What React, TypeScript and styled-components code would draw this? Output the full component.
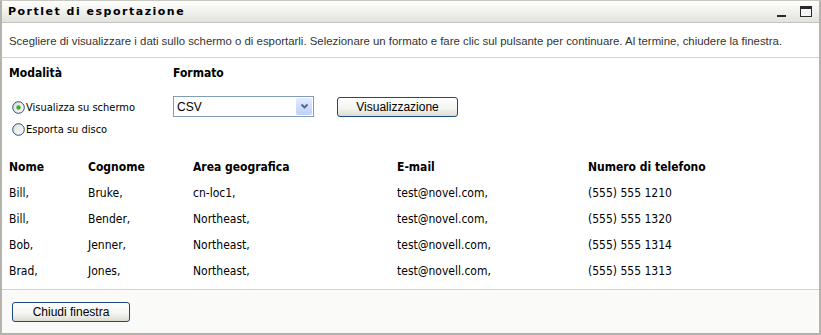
import React from 'react';
import styled, { createGlobalStyle } from 'styled-components';

const GlobalStyle = createGlobalStyle`
  html, body {
    margin: 0;
    padding: 0;
    background: #ffffff;
  }
`;

const Portlet = styled.div`
  box-sizing: border-box;
  width: 821px;
  height: 335px;
  border: 2px solid #b4b4ac;
  border-top: 1px solid #c8c8c0;
  display: flex;
  flex-direction: column;
  background: #ffffff;
`;

const TitleBar = styled.div`
  height: 21px;
  display: flex;
  align-items: center;
  justify-content: space-between;
  padding: 0 7px 0 6px;
  background: linear-gradient(#ffffff, #e2e2de);
  border-bottom: 1px solid #c4c4bc;
`;

const Title = styled.h1`
  margin: 0;
  font-family: 'DejaVu Sans', sans-serif;
  font-size: 11px;
  font-weight: bold;
  letter-spacing: 1.5px;
  color: #000000;
`;

const WindowControls = styled.div`
  display: flex;
  align-items: center;
  gap: 14px;
`;

const Intro = styled.p`
  margin: 0;
  padding: 12px 7px 10px;
  font-family: 'Liberation Sans', sans-serif;
  font-size: 11.4px;
  color: #333333;
  border-bottom: 1px solid #d4d4cc;
`;

const Body = styled.div`
  flex: 1;
  padding: 8px 7px 0;
  border-bottom: 1px solid #d4d4cc;
`;

const Options = styled.div`
  display: flex;
`;

const OptionGroup = styled.div<{ width: number }>`
  width: ${({ width }) => width}px;
  display: flex;
  flex-direction: column;
`;

const GroupLabel = styled.div`
  font-family: 'DejaVu Sans', sans-serif;
  font-stretch: condensed;
  font-size: 12px;
  font-weight: bold;
  height: 22px;
  margin-bottom: 8px;
`;

const RadioRow = styled.label`
  display: flex;
  align-items: center;
  gap: 1px;
  height: 22px;
  padding-left: 3px;
  font-family: 'DejaVu Sans', sans-serif;
  font-stretch: condensed;
  font-size: 11px;
  color: #000000;
`;

const Controls = styled.div`
  display: flex;
  gap: 23px;
  align-items: center;
`;

const Select = styled.div`
  box-sizing: border-box;
  width: 141px;
  height: 21px;
  border: 1px solid #7f9db9;
  display: flex;
  align-items: center;
  justify-content: space-between;
  padding: 1px 1px 1px 3px;
  font-family: 'Liberation Sans', sans-serif;
  font-size: 12px;
`;

const SelectArrow = styled.span`
  width: 16px;
  height: 17px;
  display: flex;
  align-items: center;
  justify-content: center;
  border-radius: 2px;
  background: linear-gradient(#e2ebfe, #bfd0f8);
`;

const Button = styled.button<{ width: number }>`
  box-sizing: border-box;
  width: ${({ width }) => width}px;
  height: 20px;
  padding: 0;
  border: 1px solid #1c4a7a;
  border-radius: 3px;
  background: linear-gradient(#ffffff 0%, #f4f4f0 60%, #dcdcd4 100%);
  font-family: 'Liberation Sans', sans-serif;
  font-size: 12px;
  color: #000000;
`;

const Table = styled.table`
  border-collapse: collapse;
  margin-top: 14px;
  font-family: 'DejaVu Sans', sans-serif;
  font-stretch: condensed;
  font-size: 12px;
  color: #000000;
`;

const HeadCell = styled.th<{ width: number }>`
  width: ${({ width }) => width}px;
  text-align: left;
  font-weight: bold;
  padding: 0;
  height: 26px;
`;

const Cell = styled.td`
  padding: 0;
  height: 26px;
`;

const Footer = styled.div`
  height: 43px;
  box-sizing: border-box;
  display: flex;
  align-items: flex-start;
  padding: 12px 10px 0;
  background: #fafaf8;
`;

const Radio: React.FC<{ checked?: boolean }> = ({ checked }) => (
  <svg width="13" height="13" viewBox="0 0 13 13">
    <defs>
      <linearGradient id="rbg" x1="0" y1="0" x2="1" y2="1">
        <stop offset="0" stopColor="#dcdcd6" />
        <stop offset="1" stopColor="#ffffff" />
      </linearGradient>
    </defs>
    <circle cx="6.5" cy="6.5" r="5.8" fill="url(#rbg)" stroke="#1c5180" strokeWidth="1" />
    {checked && <circle cx="6.5" cy="6.5" r="2.2" fill="#3cae2e" />}
  </svg>
);

const rows = [
  ['Bill,', 'Bruke,', 'cn-loc1,', 'test@novel.com,', '(555) 555 1210'],
  ['Bill,', 'Bender,', 'Northeast,', 'test@novel.com,', '(555) 555 1320'],
  ['Bob,', 'Jenner,', 'Northeast,', 'test@novell.com,', '(555) 555 1314'],
  ['Brad,', 'Jones,', 'Northeast,', 'test@novell.com,', '(555) 555 1313'],
];

const columns: [string, number][] = [
  ['Nome', 79],
  ['Cognome', 105],
  ['Area geografica', 204],
  ['E-mail', 191],
  ['Numero di telefono', 220],
];

const App: React.FC = () => (
  <>
    <GlobalStyle />
    <Portlet>
      <TitleBar>
        <Title>Portlet di esportazione</Title>
        <WindowControls>
          <svg width="9" height="12" viewBox="0 0 9 12">
            <rect x="0" y="9" width="9" height="2" fill="#2a2a2a" />
          </svg>
          <svg width="12" height="11" viewBox="0 0 12 11">
            <rect x="0.5" y="0.5" width="11" height="10" fill="#f4f4f4" stroke="#2a2a2a" />
            <rect x="0" y="0" width="12" height="3" fill="#2a2a2a" />
          </svg>
        </WindowControls>
      </TitleBar>
      <Intro>
        Scegliere di visualizzare i dati sullo schermo o di esportarli. Selezionare un formato e fare clic
        sul pulsante per continuare. Al termine, chiudere la finestra.
      </Intro>
      <Body>
        <Options>
          <OptionGroup width={164}>
            <GroupLabel>Modalità</GroupLabel>
            <RadioRow>
              <Radio checked />
              Visualizza su schermo
            </RadioRow>
            <RadioRow>
              <Radio />
              Esporta su disco
            </RadioRow>
          </OptionGroup>
          <OptionGroup width={300}>
            <GroupLabel>Formato</GroupLabel>
            <Controls>
              <Select>
                CSV
                <SelectArrow>
                  <svg width="9" height="7" viewBox="0 0 9 7">
                    <path d="M1.5 1.5 L4.5 4.5 L7.5 1.5" fill="none" stroke="#4d6185" strokeWidth="1.8" />
                  </svg>
                </SelectArrow>
              </Select>
              <Button width={121}>Visualizzazione</Button>
            </Controls>
          </OptionGroup>
        </Options>
        <Table>
          <thead>
            <tr>
              {columns.map(([name, width]) => (
                <HeadCell key={name} width={width}>
                  {name}
                </HeadCell>
              ))}
            </tr>
          </thead>
          <tbody>
            {rows.map((row, i) => (
              <tr key={i}>
                {row.map((value, j) => (
                  <Cell key={j}>{value}</Cell>
                ))}
              </tr>
            ))}
          </tbody>
        </Table>
      </Body>
      <Footer>
        <Button width={118}>Chiudi finestra</Button>
      </Footer>
    </Portlet>
  </>
);

export default App;
